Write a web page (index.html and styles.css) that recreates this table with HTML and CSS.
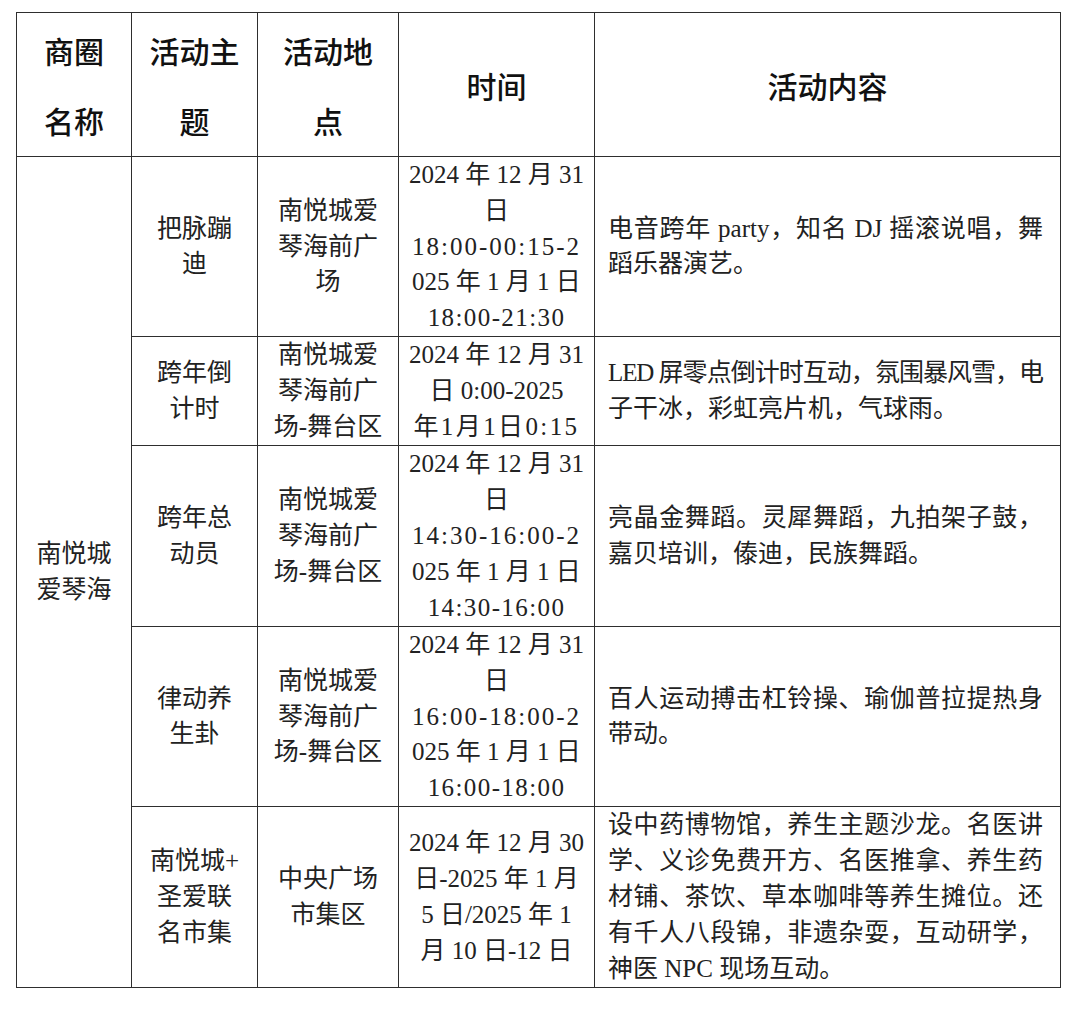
FILE: index.html
```html
<!DOCTYPE html>
<html lang="zh-CN">
<head>
<meta charset="utf-8">
<title>活动安排</title>
<link rel="stylesheet" href="styles.css">
</head>
<body>
<table class="sched">
  <colgroup>
    <col class="c1"><col class="c2"><col class="c3"><col class="c4"><col class="c5">
  </colgroup>
  <thead>
    <tr class="hrow">
      <th>商圈<br>名称</th>
      <th>活动主<br>题</th>
      <th>活动地<br>点</th>
      <th>时间</th>
      <th>活动内容</th>
    </tr>
  </thead>
  <tbody>
    <tr class="ra">
      <td rowspan="5" class="area">南悦城<br>爱琴海</td>
      <td>把脉蹦<br>迪</td>
      <td>南悦城爱<br>琴海前广<br>场</td>
      <td class="time">
        <span class="ln">2024 年 12 月 31</span>
        <span class="ln">日</span>
        <span class="ln sp2">18:00-00:15-2</span>
        <span class="ln">025 年 1 月 1 日</span>
        <span class="ln sp1">18:00-21:30</span>
      </td>
      <td class="desc">
        <span class="ln j">电音跨年 party，知名 DJ 摇滚说唱，舞</span>
        <span class="ln">蹈乐器演艺。</span>
      </td>
    </tr>
    <tr class="rb">
      <td>跨年倒<br>计时</td>
      <td>南悦城爱<br>琴海前广<br>场-舞台区</td>
      <td class="time">
        <span class="ln">2024 年 12 月 31</span>
        <span class="ln">日 0:00-2025</span>
        <span class="ln sp3">年1月1日0:15</span>
      </td>
      <td class="desc">
        <span class="ln j tight">LED 屏零点倒计时互动，氛围暴风雪，电</span>
        <span class="ln">子干冰，彩虹亮片机，气球雨。</span>
      </td>
    </tr>
    <tr class="rc">
      <td>跨年总<br>动员</td>
      <td>南悦城爱<br>琴海前广<br>场-舞台区</td>
      <td class="time">
        <span class="ln">2024 年 12 月 31</span>
        <span class="ln">日</span>
        <span class="ln sp2">14:30-16:00-2</span>
        <span class="ln">025 年 1 月 1 日</span>
        <span class="ln sp1">14:30-16:00</span>
      </td>
      <td class="desc">
        <span class="ln j">亮晶金舞蹈。灵犀舞蹈，九拍架子鼓，</span>
        <span class="ln">嘉贝培训，傣迪，民族舞蹈。</span>
      </td>
    </tr>
    <tr class="rd">
      <td>律动养<br>生卦</td>
      <td>南悦城爱<br>琴海前广<br>场-舞台区</td>
      <td class="time">
        <span class="ln">2024 年 12 月 31</span>
        <span class="ln">日</span>
        <span class="ln sp2">16:00-18:00-2</span>
        <span class="ln">025 年 1 月 1 日</span>
        <span class="ln sp1">16:00-18:00</span>
      </td>
      <td class="desc">
        <span class="ln j">百人运动搏击杠铃操、瑜伽普拉提热身</span>
        <span class="ln">带动。</span>
      </td>
    </tr>
    <tr class="re">
      <td>南悦城+<br>圣爱联<br>名市集</td>
      <td>中央广场<br>市集区</td>
      <td class="time">
        <span class="ln">2024 年 12 月 30</span>
        <span class="ln">日-2025 年 1 月</span>
        <span class="ln">5 日/2025 年 1</span>
        <span class="ln">月 10 日-12 日</span>
      </td>
      <td class="desc">
        <span class="ln j">设中药博物馆，养生主题沙龙。名医讲</span>
        <span class="ln j">学、义诊免费开方、名医推拿、养生药</span>
        <span class="ln j">材铺、茶饮、草本咖啡等养生摊位。还</span>
        <span class="ln j">有千人八段锦，非遗杂耍，互动研学，</span>
        <span class="ln">神医 NPC 现场互动。</span>
      </td>
    </tr>
  </tbody>
</table>
</body>
</html>
```

FILE: styles.css
```css
html, body {
  margin: 0;
  padding: 0;
  background: #ffffff;
}

body {
  padding: 12px 0 0 16px;
}

.sched {
  border-collapse: collapse;
  table-layout: fixed;
  width: 1044px;
  font-family: "Liberation Serif", "Noto Sans CJK SC", serif;
  font-size: 25px;
  line-height: 35.8px;
  color: #222222;
}

.c1 { width: 115px; }
.c2 { width: 126px; }
.c3 { width: 141px; }
.c4 { width: 196px; }
.c5 { width: 466px; }

.sched th,
.sched td {
  border: 1px solid #2e2e2e;
  padding: 0;
  text-align: center;
  vertical-align: middle;
}

.sched th {
  font-family: "Noto Sans CJK SC", sans-serif;
  font-size: 30px;
  font-weight: 500;
  line-height: 70px;
  color: #111111;
}

.hrow { height: 144px; }
.ra { height: 179px; }
.rb { height: 109px; }
.rc { height: 181px; }
.rd { height: 180px; }
.re { height: 181px; }

.ln {
  display: block;
  white-space: nowrap;
}

.time .ln {
  text-align: center;
}

.sp1 { letter-spacing: 1.4px; }
.sp2 { letter-spacing: 2px; }
.sp3 { letter-spacing: 2.4px; }

.sched td.desc {
  text-align: left;
  padding: 0 17px 0 13px;
}

.desc .ln.j {
  text-align: justify;
  text-align-last: justify;
}

.desc .ln.tight {
  letter-spacing: -1.1px;
}
```
